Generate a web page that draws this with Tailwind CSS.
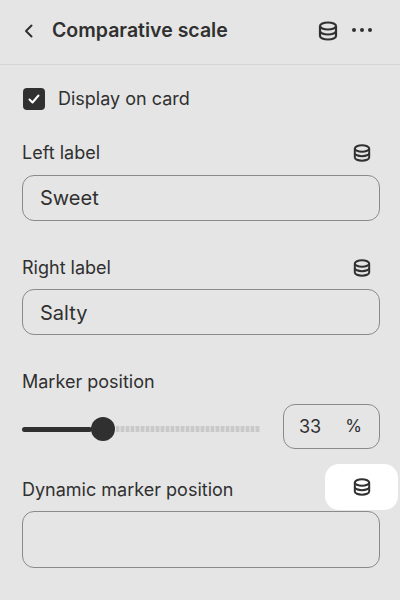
<!DOCTYPE html>
<html lang="en">
<head>
    <meta charset="UTF-8">
    <meta name="viewport" content="width=device-width, initial-scale=1.0">
    <title>Comparative scale</title>
    <script src="https://cdn.jsdelivr.net/npm/@tailwindcss/browser@4"></script>
</head>
<body class="bg-[#e5e5e5] font-['Inter',sans-serif] text-[#303030]">
<div class="w-[400px] h-[600px] overflow-hidden">
    <header class="h-[65px] flex items-center pl-[21px] pr-[28px] pb-[2px] border-b border-[#d6d6d6]">
        <svg class="w-4 h-4 mr-[15px]" viewBox="0 0 16 16" fill="none" stroke="#303030" stroke-width="2" stroke-linecap="round" stroke-linejoin="round"><path d="M10.5 2.5 5 8l5.500 5.500"/></svg>
        <h1 class="text-[19.5px] font-semibold text-[#303030]">Comparative scale</h1>
        <svg class="w-[20px] h-[20px] ml-auto" viewBox="0 0 20 20" fill="none" stroke="#303030" stroke-width="2.200"><ellipse cx="10" cy="5" rx="8" ry="3.500"/><path d="M2 5v10c0 2 3.600 3.500 8 3.500s8-1.500 8-3.500V5"/><path d="M2 10c0 2 3.600 3.500 8 3.500s8-1.500 8-3.500"/></svg>
        <div class="flex gap-[4px] ml-[14px] -mt-[2px]">
            <span class="w-1 h-1 rounded-full bg-[#303030]"></span>
            <span class="w-1 h-1 rounded-full bg-[#303030]"></span>
            <span class="w-1 h-1 rounded-full bg-[#303030]"></span>
        </div>
    </header>

    <div class="pl-[22px] pr-[20px]">
        <label class="flex items-center gap-[13px] mt-[23px] pl-px">
            <span class="w-[22px] h-[22px] rounded-[4px] bg-[#303030] flex items-center justify-center">
                <svg class="w-[14px] h-[14px]" viewBox="0 0 14 14" fill="none" stroke="#fff" stroke-width="2" stroke-linecap="round" stroke-linejoin="round"><path d="M2.500 7.500 5.500 10.500 11.500 3.500"/></svg>
            </span>
            <span class="text-[18px] leading-[22px]">Display on card</span>
        </label>

        <div class="flex items-center justify-between mt-[31px] h-[24px]">
            <span class="text-[18px] leading-[22px]">Left label</span>
            <svg class="w-[18px] h-[18px] mr-[9px]" viewBox="0 0 20 20" fill="none" stroke="#303030" stroke-width="2.200"><ellipse cx="10" cy="5" rx="8" ry="3.500"/><path d="M2 5v10c0 2 3.600 3.500 8 3.500s8-1.500 8-3.500V5"/><path d="M2 10c0 2 3.600 3.500 8 3.500s8-1.500 8-3.500"/></svg>
        </div>
        <div class="mt-[10px] h-[46px] w-[358px] rounded-[12px] border border-[#8a8a8a] flex items-center px-[17px] pb-px text-[20px]">Sweet</div>

        <div class="flex items-center justify-between mt-[35px] h-[24px]">
            <span class="text-[18px] leading-[22px]">Right label</span>
            <svg class="w-[18px] h-[18px] mr-[9px]" viewBox="0 0 20 20" fill="none" stroke="#303030" stroke-width="2.200"><ellipse cx="10" cy="5" rx="8" ry="3.500"/><path d="M2 5v10c0 2 3.600 3.500 8 3.500s8-1.500 8-3.500V5"/><path d="M2 10c0 2 3.600 3.500 8 3.500s8-1.500 8-3.500"/></svg>
        </div>
        <div class="mt-[9px] h-[46px] w-[358px] rounded-[12px] border border-[#8a8a8a] flex items-center px-[17px] pt-px text-[20px]">Salty</div>

        <div class="mt-[35px] h-[24px] flex items-center text-[18px] leading-[22px]">Marker position</div>
        <div class="flex items-start mt-[10px]">
            <div class="w-[238px] flex items-center mt-[13px]">
                <div class="w-[70px] h-[5px] rounded-full bg-[#303030]"></div>
                <div class="w-[24px] h-[24px] rounded-full bg-[#303030] -ml-[1px] shrink-0"></div>
                <div class="flex-1 h-[6px] ml-[1px] bg-[repeating-linear-gradient(90deg,#c9c9c9_0,#c9c9c9_3px,#dadada_3px,#dadada_5px)]"></div>
            </div>
            <div class="ml-[23px] w-[97px] h-[45px] rounded-[12px] border border-[#8a8a8a] flex items-center justify-between pl-[15px] pr-[17px] text-[18px]">
                <span>33</span><span class="text-[17px]">%</span>
            </div>
        </div>

        <div class="relative flex items-center mt-[29px] h-[24px] text-[18px] leading-[22px]">
            Dynamic marker position
            <div class="absolute right-[-18px] top-[-14px] w-[73px] h-[46px] rounded-[14px] bg-white flex items-center justify-center">
                <svg class="w-[18px] h-[18px]" viewBox="0 0 20 20" fill="none" stroke="#303030" stroke-width="2.200"><ellipse cx="10" cy="5" rx="8" ry="3.500"/><path d="M2 5v10c0 2 3.600 3.500 8 3.500s8-1.500 8-3.500V5"/><path d="M2 10c0 2 3.600 3.500 8 3.500s8-1.500 8-3.500"/></svg>
            </div>
        </div>
        <div class="mt-[9px] h-[57px] w-[358px] rounded-[12px] border border-[#8a8a8a]"></div>
    </div>
</div>
</body>
</html>
